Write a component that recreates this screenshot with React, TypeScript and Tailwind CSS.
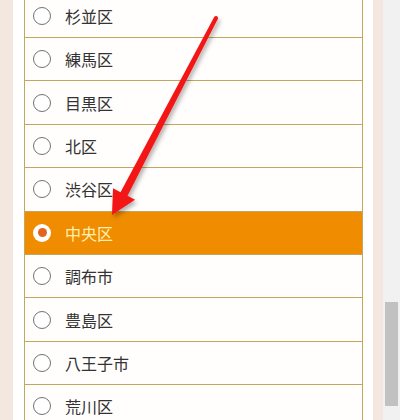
import React from 'react'

const wards = ['杉並区', '練馬区', '目黒区', '北区', '渋谷区', '中央区', '調布市', '豊島区', '八王子市', '荒川区']
const selected = '中央区'

function Radio({ checked }: { checked: boolean }) {
  if (checked) {
    return (
      <span className="w-[18px] h-[18px] rounded-full bg-white flex items-center justify-center">
        <span className="w-[9px] h-[9px] rounded-full bg-[#e2641f]" />
      </span>
    )
  }
  return <span className="w-[18px] h-[18px] rounded-full border border-[#727272] bg-white" />
}

function Arrow() {
  return (
    <svg className="absolute inset-0 pointer-events-none" width="400" height="420" viewBox="0 0 400 420">
      <defs>
        <filter id="sh" x="-20%" y="-20%" width="140%" height="140%">
          <feDropShadow dx="2" dy="3" stdDeviation="2" floodColor="#000" floodOpacity="0.3" />
        </filter>
      </defs>
      <g filter="url(#sh)" fill="#f31414">
        <polygon points="214.2,17.1 120.5,192.2 113,188.2 112,215 135,199.8 127.5,195.8 217.8,18.9" />
        <circle cx="216" cy="18" r="2" />
      </g>
    </svg>
  )
}

export default function App() {
  return (
    <div
      className="relative w-[400px] h-[420px] overflow-hidden flex"
      style={{ fontFamily: '"Noto Sans CJK JP", "Noto Sans", sans-serif' }}
    >
      <div className="w-[13px] bg-[#f3e7df]" />
      <div className="w-[360px] bg-white pl-[11px] pr-[10px]">
        <ul className="-mt-[5.4px] border-x border-[#c4a75e]">
          {wards.map((w) => {
            const on = w === selected
            return (
              <li
                key={w}
                className={`h-[43.4px] border-b border-[#c4a75e] flex items-center pl-[8px] gap-[14px] ${
                  on ? 'bg-[#ef8c00] text-[#ffeeae]' : 'bg-[#fffefc] text-[#333]'
                }`}
              >
                <Radio checked={on} />
                <span className="text-[16px] leading-none">{w}</span>
              </li>
            )
          })}
        </ul>
      </div>
      <div className="w-[10px] bg-[#f3e7df]" />
      <div className="w-[17px] bg-[#f1f1f1] pl-[2px]">
        <div className="mt-[302px] w-[13px] h-[104px] bg-[#c1c1c1]" />
      </div>
      <Arrow />
    </div>
  )
}
